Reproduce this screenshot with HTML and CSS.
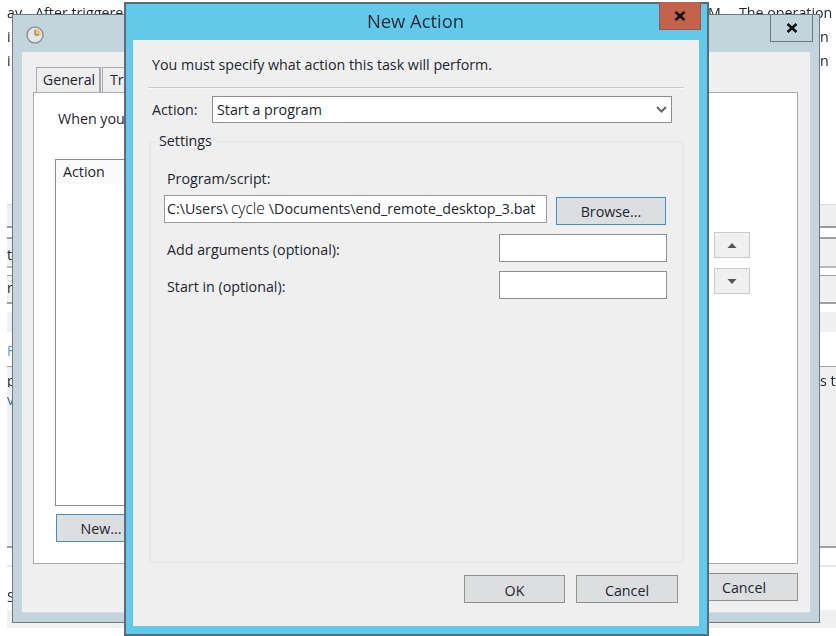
FILE: index.html
```html
<!DOCTYPE html>
<html lang="en">
<head>
<meta charset="utf-8">
<title>New Action</title>
<link rel="stylesheet" href="styles.css">
</head>
<body>
<div class="stage">
  <div class="backdrop">
    <div class="bd-row bd-text bd-r1"><span class="c1">ay</span><span class="c2">After triggere</span><span class="c3">M</span><span class="c4">The operation</span></div>
    <div class="bd-row bd-text bd-r2"><span class="c1">i</span><span class="c5">n</span></div>
    <div class="bd-row bd-text bd-r2"><span class="c1">i</span><span class="c5">n</span></div>
    <div class="bd-row bd-gap1"></div>
    <div class="bd-row bd-band1"></div>
    <div class="bd-row bd-thin1"></div>
    <div class="bd-row bd-band2"><span class="c1">tt</span></div>
    <div class="bd-row bd-thin2"></div>
    <div class="bd-row bd-band3"><span class="c1">r</span></div>
    <div class="bd-row bd-light"></div>
    <div class="bd-row bd-f"><span class="c1 link">F</span></div>
    <div class="bd-row bd-p"><span class="c1">p</span><span class="c6">s t</span></div>
    <div class="bd-row bd-v"><span class="c1 link-dark">v</span></div>
    <div class="bd-row bd-rest"></div>
    <div class="bd-row bd-s"><span class="c1">S</span></div>
    <div class="bd-row bd-end"></div>
  </div>

  <section class="window task">
    <header class="task-title">
      <svg class="clock" width="18" height="18" viewBox="0 0 18 18">
        <circle cx="9" cy="9" r="8" fill="#e4e4e4" stroke="#8d9498" stroke-width="1.5"/>
        <path d="M9 3a6 6 0 0 1 6 6H9z" fill="#f0c55a"/>
        <path d="M9 4v5h4" fill="none" stroke="#6f7478" stroke-width="1"/>
      </svg>
      <div class="task-close"><svg width="12" height="10" viewBox="0 0 12 10"><path d="M1.5 1l9 8M10.500 1l-9 8" stroke="#111" stroke-width="2.600"/></svg></div>
    </header>
    <div class="task-body">
      <nav class="tabs"><div class="tab">General</div><div class="tab tab2">Tr</div></nav>
      <div class="panel">
        <p class="when">When you</p>
        <div class="list-row">
          <div class="list"><div class="list-head">Action</div></div>
          <div class="side">
            <div class="side-btn"><svg width="10" height="5" viewBox="0 0 10 5"><path d="M5 0l4.500 5h-9z" fill="#555"/></svg></div>
            <div class="side-btn"><svg width="10" height="5" viewBox="0 0 10 5"><path d="M.5 0h9L5 5z" fill="#555"/></svg></div>
          </div>
        </div>
        <div class="btn btn-focus new">New...</div>
      </div>
      <footer class="task-foot"><div class="btn task-cancel">Cancel</div></footer>
    </div>
  </section>

  <section class="window dialog">
    <header class="dlg-title">
      <h1>New Action</h1>
      <div class="dlg-close"><svg width="12" height="10" viewBox="0 0 12 10"><path d="M1.500 1l9 8M10.500 1l-9 8" stroke="#111" stroke-width="2.600"/></svg></div>
    </header>
    <div class="dlg-body">
      <p class="must">You must specify what action this task will perform.</p>
      <div class="sep"></div>
      <div class="action-row">
        <span class="action-label">Action:</span>
        <div class="select"><span>Start a program</span>
          <svg width="11" height="7" viewBox="0 0 11 7"><path d="M1 1l4.500 4.500L10 1" fill="none" stroke="#666" stroke-width="2"/></svg>
        </div>
      </div>
      <fieldset class="settings">
        <legend>Settings</legend>
        <div class="field-label">Program/script:</div>
        <div class="prog-row">
          <div class="input path">C:\Users\<span class="user">cycle</span>\Documents\end_remote_desktop_3.bat</div>
          <div class="btn btn-focus browse">Browse...</div>
        </div>
        <div class="opt-row"><span class="opt-label">Add arguments (optional):</span><div class="input opt"></div></div>
        <div class="opt-row"><span class="opt-label">Start in (optional):</span><div class="input opt"></div></div>
      </fieldset>
      <footer class="dlg-foot">
        <div class="btn dlg-btn dlg-ok">OK</div>
        <div class="btn dlg-btn">Cancel</div>
      </footer>
    </div>
  </section>
</div>
</body>
</html>
```
FILE: styles.css
```css
* { box-sizing: border-box; }
html, body { margin: 0; padding: 0; background: #fff; }
body {
  width: 836px;
  height: 636px;
  overflow: hidden;
  font-family: "Open Sans", "Noto Sans", sans-serif;
  font-size: 14.25px;
  color: #1c2530;
}
.stage {
  position: relative;
  width: 836px;
  height: 636px;
  overflow: hidden;
  filter: blur(0.35px);
}

/* backdrop page, mostly covered by the windows */
.backdrop { margin-left: 7px; height: 636px; display: flex; flex-direction: column; }
.bd-row { position: relative; flex: none; white-space: nowrap; }
.bd-row span { position: absolute; top: 0; }
.bd-text { line-height: 24px; }
.bd-r1 { height: 25px; line-height: 26px; }
.bd-r2 { height: 24px; }
.bd-gap1 { height: 132px; border-bottom: 1px solid #dcdcdc; }
.bd-band1 { height: 23px; background: #efefef; border-bottom: 2px solid #9a9a9a; }
.bd-thin1 { height: 9px; }
.bd-thin2 { height: 7px; }
.bd-band2 { height: 31px; background: #f0f0f0; border-top: 2px solid #9f9f9f; border-bottom: 2px solid #b8b8b8; line-height: 32px; }
.bd-band3 { height: 29px; background: #f0f0f0; border-top: 1px solid #a0a0a0; border-bottom: 2px solid #a0a0a0; line-height: 24px; }
.bd-light { height: 28px; background: linear-gradient(#fff 8px, #f0f0f0 8px); }
.bd-f { height: 35px; line-height: 38px; border-bottom: 1px solid #a0a0a0; }
.bd-p { height: 20px; line-height: 28px; background: #f0f0f0; }
.bd-v { height: 20px; line-height: 26px; background: #f0f0f0; }
.bd-rest { height: 141px; background: #f0f0f0; border-bottom: 2px solid #a0a0a0; }
.bd-s { height: 62px; line-height: 98px; background: linear-gradient(#fff 17px, #e8e8e8 17px, #e8e8e8 19px, #fff 19px); }
.bd-end { height: 18px; background: #f0f0f0; }
.c1 { left: 0; }
.c2 { left: 28px; }
.c3 { left: 701px; }
.c4 { left: 732px; }
.c5 { left: 813px; }
.c6 { left: 813px; }
.link { color: #5a9ccf; }
.link-dark { color: #3b6f9c; }

.window { position: absolute; }

/* Task properties window behind */
.task {
  left: 12px;
  top: 14px;
  width: 808px;
  height: 609px;
  display: flex;
  flex-direction: column;
  background: #c3d5dc;
  border: 1.500px solid #6f787d;
}
.task-title {
  position: relative;
  flex: none;
  height: 37px;
  display: flex;
  align-items: center;
  padding: 2px 0 0 13px;
}
.task-close {
  position: absolute;
  top: -1px;
  right: 6px;
  width: 43px;
  height: 28px;
  display: flex;
  align-items: center;
  justify-content: center;
  border: 1px solid #6f787d;
  border-top: 0;
}
.task-body {
  flex: none;
  margin: 0 9px 0 9px;
  height: 561px;
  background: #efefef;
  padding: 15px 11px 0 11px;
  border-bottom: 1px solid #d6dcdf;
}
.tabs { display: flex; height: 25px; padding-left: 3px; gap: 1px; }
.tab {
  width: 65px;
  height: 25px;
  background: #eeeeee;
  border: 1px solid #a9a9af;
  border-width: 1px 2px 0 1px;
  padding-left: 2px;
  text-align: center;
  line-height: 23px;
}
.tab2 { width: 80px; padding-left: 7px; text-align: left; }
.panel {
  width: 765px;
  height: 472px;
  background: #fff;
  border: 1px solid #a9a9af;
  padding: 15px 0 0 21px;
}
.when { margin: 0 0 0 3px; height: 51px; line-height: 21px; white-space: nowrap; }
.list-row { display: flex; align-items: flex-start; }
.list {
  width: 652px;
  height: 347px;
  border: 1px solid #8c8c8c;
  background: #fff;
}
.list-head { height: 24px; background: #fafafa; line-height: 24px; padding-left: 7px; }
.side { margin: 73px 0 0 7px; display: flex; flex-direction: column; gap: 10px; }
.side-btn {
  width: 36px;
  height: 26px;
  background: #f0f0f0;
  border: 1.500px solid #c6ccd0;
  display: flex;
  align-items: center;
  justify-content: center;
}
.btn {
  display: flex;
  align-items: center;
  justify-content: center;
  background: #dddee0;
  border: 1.500px solid #919191;
}
.btn-focus { border-color: #4a8cc4; }
.new { width: 90px; height: 28px; margin: 8px 0 0 1px; }
.task-foot { display: flex; justify-content: flex-end; margin-top: 9px; }
.task-cancel { width: 108px; height: 28px; margin-right: 1px; }

/* New Action dialog */
.dialog {
  left: 124px;
  top: 2px;
  width: 585px;
  height: 634px;
  background: #63c9ea;
  border: 2px solid #5a6c76;
  display: flex;
  flex-direction: column;
}
.dlg-title {
  position: relative;
  flex: none;
  height: 36px;
  display: flex;
  align-items: center;
  justify-content: center;
}
.dlg-title h1 { margin: -4px 2px 0 0; font-size: 18.4px; font-weight: 400; color: #1e2a33; }
.dlg-close {
  position: absolute;
  top: -2px;
  right: 6px;
  width: 42px;
  height: 28px;
  display: flex;
  align-items: center;
  justify-content: center;
  background: #c4614b;
  border: 1px solid #8f5a4c;
  border-top: 0;
}
.dlg-body {
  flex: none;
  margin: 0 7px;
  width: 566px;
  height: 586px;
  background: #efefef;
  padding: 14px 15px 0 15px;
  display: flex;
  flex-direction: column;
}
.must { margin: 0 0 0 4px; height: 22px; line-height: 22px; white-space: nowrap; }
.sep { height: 2px; margin-top: 11px; background: #c9c9c9; border-bottom: 1px solid #f8f8f8; }
.action-row { display: flex; align-items: center; margin-top: 7px; height: 27px; padding-left: 4px; }
.action-label { width: 60px; }
.select {
  width: 460px;
  height: 27px;
  background: #fff;
  border: 1.500px solid #8e8e8e;
  display: flex;
  align-items: center;
  justify-content: space-between;
  padding: 0 4px 0 4px;
}
.settings {
  margin: 8px 0 0 1px;
  padding: 0;
  width: 535px;
  height: 432px;
  border: 2px solid #e8e8e8;
  border-radius: 3px;
  min-width: 0;
}
.settings legend { margin-left: 4px; padding: 0 4px 2px; line-height: 20px; }
.field-label { margin: 16px 0 0 16px; line-height: 20px; height: 26px; }
.prog-row { display: flex; align-items: flex-start; margin: 0 0 0 13px; }
.input { background: #fff; border: 1.500px solid #8e8e8e; }
.path {
  width: 383px;
  height: 28px;
  line-height: 25px;
  padding-left: 2px;
  white-space: nowrap;
  border-color: #999;
}
.user { color: #000; margin: 0 4px 0 3px; font-family: "Open Sans", sans-serif; font-weight: 350; font-size: 15.5px; }
.browse { width: 110px; height: 28px; margin: 2px 0 0 9px; }
.opt-row {
  display: flex;
  align-items: center;
  justify-content: space-between;
  height: 28px;
  margin: 9px 15px 0 16px;
}
.opt-label { padding-top: 2px; }
.opt { width: 168px; height: 28px; }
.dlg-foot { display: flex; justify-content: flex-end; gap: 11px; margin: 12px 6px 0 0; }
.dlg-btn { width: 102px; height: 28px; padding-top: 2px; }
.dlg-ok { width: 101px; }
```
